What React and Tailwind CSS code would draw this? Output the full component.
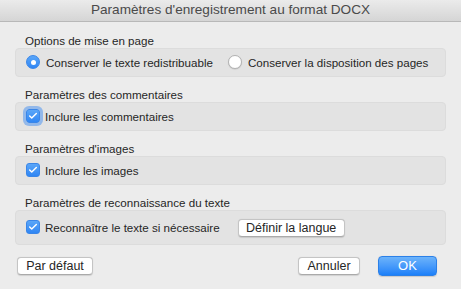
import { Check } from 'lucide-react'

function Radio({ checked, label }) {
  return (
    <label className="flex items-center gap-[6px] whitespace-nowrap">
      {checked ? (
        <span className="shrink-0 w-[14px] h-[14px] rounded-full bg-gradient-to-b from-[#5aa6f8] to-[#2f86f4] border border-[#3a86e8] flex items-center justify-center">
          <span className="w-[5px] h-[5px] rounded-full bg-white" />
        </span>
      ) : (
        <span className="shrink-0 w-[14px] h-[14px] rounded-full bg-white border border-[#b3b3b3] shadow-[0_0.5px_1px_rgba(0,0,0,0.15)]" />
      )}
      <span>{label}</span>
    </label>
  )
}

function Checkbox({ label, focused }) {
  return (
    <label className="flex items-center gap-[5px] whitespace-nowrap">
      <span
        className={
          'shrink-0 w-[14px] h-[14px] rounded-[3px] bg-gradient-to-b from-[#5aa6f8] to-[#2f86f4] border border-[#3a86e8] flex items-center justify-center ' +
          (focused ? 'shadow-[0_0_0_3px_rgba(80,150,240,0.55)]' : '')
        }
      >
        <Check size={10} strokeWidth={3.5} color="white" />
      </span>
      <span>{label}</span>
    </label>
  )
}

function Button({ children, className = '' }) {
  return (
    <button className={'h-[18px] rounded-[4px] bg-white border border-[#c4c4c4] border-b-[#aaaaaa] shadow-[0_0.5px_1px_rgba(0,0,0,0.12)] text-[12.5px] leading-[16px] text-[#262626] whitespace-nowrap ' + className}>
      {children}
    </button>
  )
}

function Group({ title, children, boxClass = 'h-[29px]' }) {
  return (
    <div>
      <div className="h-[14px] leading-[14px] pl-[10px]">{title}</div>
      <div className={'rounded-[4px] bg-[#e3e3e3] border border-[#dcdcdc] flex items-center px-[10px] ' + boxClass}>
        {children}
      </div>
    </div>
  )
}

export default function App() {
  return (
    <div className="w-[461px] h-[289px] bg-[#ececec] text-[#262626] text-[11.6px] font-['Liberation_Sans',Arial,sans-serif] overflow-hidden">
      <div className="h-[22px] bg-gradient-to-b from-[#ebebeb] to-[#d5d5d5] border-b border-[#b8b8b8] flex items-center justify-center text-[13.6px] text-[#4a4a4a]">
        Paramètres d'enregistrement au format DOCX
      </div>

      <div className="px-[15px] pt-[12px] flex flex-col gap-[11px]">
        <Group title="Options de mise en page">
          <div className="flex items-center gap-[15px]">
            <Radio checked label="Conserver le texte redistribuable" />
            <Radio label="Conserver la disposition des pages" />
          </div>
        </Group>

        <Group title="Paramètres des commentaires">
          <Checkbox focused label="Inclure les commentaires" />
        </Group>

        <Group title="Paramètres d'images">
          <Checkbox label="Inclure les images" />
        </Group>

        <Group title="Paramètres de reconnaissance du texte" boxClass="h-[35px]">
          <Checkbox label="Reconnaître le texte si nécessaire" />
          <Button className="w-[107px] ml-[18px]">Définir la langue</Button>
        </Group>
      </div>

      <div className="flex items-center px-[17px] mt-[11px]">
        <Button className="w-[76px]">Par défaut</Button>
        <div className="flex-1" />
        <Button className="w-[62px]">Annuler</Button>
        <button className="ml-[18px] mr-[7px] w-[59px] h-[20px] rounded-[4px] bg-gradient-to-b from-[#6cb3fa] to-[#1b80f9] border border-[#2b80e8] text-white text-[13px] leading-[18px] shadow-[0_0.5px_1px_rgba(0,0,0,0.15)]">
          OK
        </button>
      </div>
    </div>
  )
}
